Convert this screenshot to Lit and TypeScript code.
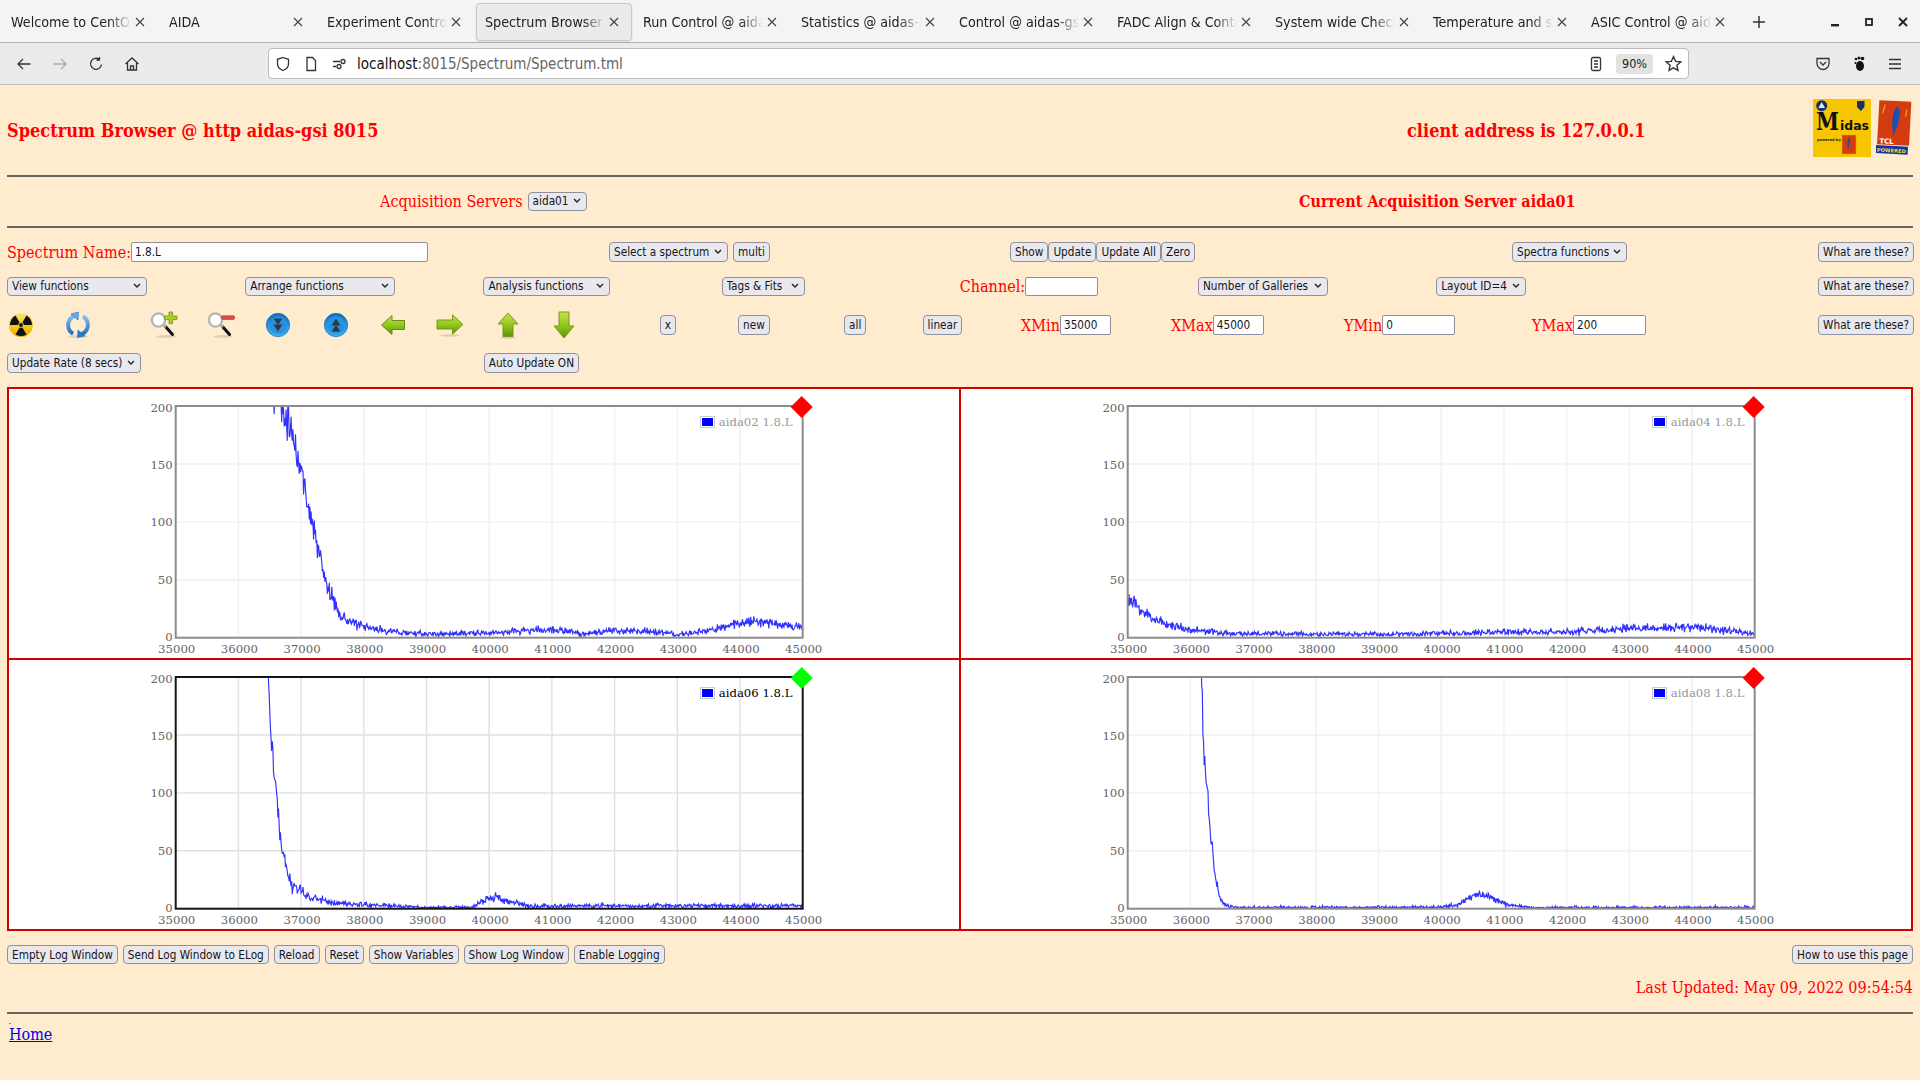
import { LitElement, html, css, svg } from "lit";
import { customElement, property } from "lit/decorators.js";

// x position / counts pairs, the noise is added on top
type Curve = [number, number][];

const CURVES: Record<string, Curve> = {
  aida02: [[35000, 900], [36450, 400], [36550, 215], [36650, 205], [36800, 190], [37000, 145], [37175, 100], [37381, 50], [37500, 33], [37670, 17], [37990, 9], [38500, 5], [39000, 3], [40000, 4], [40500, 6], [41000, 7], [41500, 3.5], [42000, 6], [42500, 6], [43000, 2.5], [43500, 6], [44000, 13], [44300, 15], [44700, 11], [45000, 9]],
  aida04: [[35000, 33], [35300, 20], [35600, 12], [36000, 7], [36500, 4], [37000, 3.5], [38000, 3], [39000, 3], [40000, 4], [41000, 5], [42000, 5], [43000, 8], [44000, 9], [44500, 7], [45000, 3]],
  aida06: [[35000, 900], [36400, 320], [36475, 200], [36513, 150], [36600, 100], [36690, 50], [36850, 20], [37140, 10], [37500, 5], [38580, 2], [39000, 1], [39700, 1.2], [39900, 6], [40000, 9], [40100, 10], [40300, 7], [40600, 2.5], [42000, 2.5], [45000, 2.5]],
  aida08: [[35000, 900], [36100, 320], [36169, 200], [36206, 150], [36260, 100], [36350, 50], [36400, 25], [36460, 10], [36540, 4], [36700, 1], [40000, 1.2], [40300, 4], [40500, 11], [40650, 13], [40900, 7], [41100, 3], [41400, 1], [45000, 1]],
};

const X_TICKS = [35000, 36000, 37000, 38000, 39000, 40000, 41000, 42000, 43000, 44000, 45000];
const Y_TICKS = [0, 50, 100, 150, 200];

const PLOT = { left: 166.7, right: 793.7, top: 17, bottom: 248.7 };

function seeded(seed: number) {
  return () => {
    seed = (seed + 0x6d2b79f5) | 0;
    let t = Math.imul(seed ^ (seed >>> 15), 1 | seed);
    t = (t + Math.imul(t ^ (t >>> 7), 61 | t)) ^ t;
    return ((t ^ (t >>> 14)) >>> 0) / 4294967296;
  };
}

function sample(curve: Curve, x: number) {
  for (let i = 1; i < curve.length; i++) {
    if (x <= curve[i][0]) {
      const [x0, y0] = curve[i - 1];
      const [x1, y1] = curve[i];
      return y0 + ((y1 - y0) * (x - x0)) / (x1 - x0);
    }
  }
  return curve[curve.length - 1][1];
}

const px = (x: number) => PLOT.left + ((x - 35000) / 10000) * (PLOT.right - PLOT.left);
const py = (y: number) => PLOT.bottom - (y / 200) * (PLOT.bottom - PLOT.top);

function spectrumPath(name: string, seed: number) {
  const rnd = seeded(seed);
  const curve = CURVES[name];
  let d = "";
  for (let x = 35000; x <= 45000; x += 10) {
    const v = sample(curve, x);
    const noise = (rnd() + rnd() + rnd() - 1.5) * Math.sqrt(v) * 1.25;
    const y = Math.max(0, v + noise);
    d += `${d ? "L" : "M"}${px(x).toFixed(1)} ${py(y).toFixed(1)}`;
  }
  return d;
}

@customElement("spectrum-chart")
export class SpectrumChart extends LitElement {
  static styles = css`
    :host {
      display: block;
      background: #fff;
    }
    svg {
      display: block;
      overflow: hidden;
    }
    text {
      font-family: "DejaVu Serif", serif;
      font-size: 11.7px;
      font-stretch: normal;
      fill: #666;
    }
    .legend {
      fill: #999;
    }
    .active .legend {
      fill: #000;
    }
    .grid {
      stroke: #f0f0f0;
      stroke-width: 1.4;
    }
    .active .grid {
      stroke: #e0e0e0;
    }
    .frame {
      fill: none;
      stroke: #8c8c8c;
      stroke-width: 2;
    }
    .active .frame {
      stroke: #141414;
    }
    .trace {
      fill: none;
      stroke: #1a1aff;
      stroke-width: 1.15;
      stroke-opacity: 0.9;
    }
  `;

  @property() name = "aida02";
  @property({ type: Number }) seed = 1;
  @property({ type: Boolean }) active = false;

  render() {
    const { left, right, top, bottom } = PLOT;
    const cx = right - 1;
    const cy = top + 1;
    return html`
      <svg width="950" height="269" viewBox="0 0 950 269" class=${this.active ? "active" : ""}>
        <defs>
          <clipPath id="plot"><rect x=${left} y=${top} width=${right - left} height=${bottom - top}></rect></clipPath>
        </defs>
        ${X_TICKS.slice(1, -1).map((t) => svg`<line class="grid" x1=${px(t)} x2=${px(t)} y1=${top} y2=${bottom}></line>`)}
        ${Y_TICKS.slice(1, -1).map((t) => svg`<line class="grid" x1=${left} x2=${right} y1=${py(t)} y2=${py(t)}></line>`)}
        <path class="trace" clip-path="url(#plot)" d=${spectrumPath(this.name, this.seed)}></path>
        <rect class="frame" x=${left} y=${top} width=${right - left} height=${bottom - top}></rect>
        ${X_TICKS.map((t) => svg`<text x=${px(t) + 1} y="264" text-anchor="middle">${t}</text>`)}
        ${Y_TICKS.map((t) => svg`<text x="163.7" y=${py(t) + 3.2 + (t / 200) * 2.8} text-anchor="end">${t}</text>`)}
        <rect x="691.5" y="27.5" width="14" height="11" fill="#fff" stroke="#ccc"></rect>
        <rect x="693" y="29" width="11" height="8" fill="#00f"></rect>
        <text class="legend" x="709.7" y="37">${this.name} 1.8.L</text>
        <polygon points="${cx},${cy - 11} ${cx + 11},${cy} ${cx},${cy + 11} ${cx - 11},${cy}" fill=${this.active ? "#0f0" : "#f00"}></polygon>
      </svg>
    `;
  }
}

function wedge(angle: number) {
  const a0 = ((angle - 30) * Math.PI) / 180;
  const a1 = ((angle + 30) * Math.PI) / 180;
  const p = (r: number, a: number) => `${(14 + r * Math.cos(a)).toFixed(2)} ${(14 + r * Math.sin(a)).toFixed(2)}`;
  return `M${p(2.8, a0)}L${p(11, a0)}A11 11 0 0 1 ${p(11, a1)}L${p(2.8, a1)}A2.8 2.8 0 0 0 ${p(2.8, a0)}Z`;
}

const iconDefs = svg`
  <defs>
    <linearGradient id="gGreen" x1="0" y1="0" x2="0" y2="1">
      <stop offset="0" stop-color="#c4e34a"></stop>
      <stop offset="0.55" stop-color="#8ec31c"></stop>
      <stop offset="1" stop-color="#5d9606"></stop>
    </linearGradient>
    <linearGradient id="gBlue" x1="0" y1="0" x2="0" y2="1">
      <stop offset="0" stop-color="#0f6fc0"></stop>
      <stop offset="0.5" stop-color="#1f96e6"></stop>
      <stop offset="1" stop-color="#38b4f2"></stop>
    </linearGradient>
    <linearGradient id="gYellow" x1="0" y1="0" x2="0" y2="1">
      <stop offset="0" stop-color="#f7e27a"></stop>
      <stop offset="0.6" stop-color="#f6c614"></stop>
      <stop offset="1" stop-color="#e9a700"></stop>
    </linearGradient>
    <linearGradient id="gArc" x1="0" y1="0" x2="0" y2="1">
      <stop offset="0" stop-color="#8cc0ee"></stop>
      <stop offset="1" stop-color="#1f6fc4"></stop>
    </linearGradient>
  </defs>
`;

function lens(sign: "plus" | "minus") {
  return svg`
    <ellipse cx="15" cy="25.5" rx="10" ry="1.4" fill="#000" opacity="0.12"></ellipse>
    <line x1="14.5" y1="15.5" x2="21.5" y2="23.5" stroke="#111" stroke-width="3" stroke-linecap="round"></line>
    <line x1="12" y1="13" x2="15" y2="16" stroke="#aaa" stroke-width="2.5"></line>
    <circle cx="7.5" cy="9" r="6.6" fill="#fff" stroke="#b5b5b5" stroke-width="2.2"></circle>
    ${sign === "plus"
      ? svg`<path d="M18 1h3.6v4H26v3.6h-4.4v4H18v-4h-4.4V5H18z" fill="#a9cf2a" stroke="#6f9412" stroke-width="0.8"></path>`
      : svg`<rect x="13.5" y="4.8" width="13" height="3.6" rx="1" fill="#e04848" stroke="#b53030" stroke-width="0.6"></rect>`}
  `;
}

function bubble(down: boolean) {
  return svg`
    <circle cx="14" cy="14" r="11.7" fill="url(#gBlue)" stroke="#0f5fa8" stroke-width="0.6"></circle>
    <circle cx="14" cy="14" r="8.8" fill="#2a90dc"></circle>
    <g transform=${down ? "" : "rotate(180 14 14)"} fill="#2c3a48">
      <polygon points="9.500,7.500 18.500,7.500 14,14"></polygon>
      <polygon points="9.500,13.500 18.500,13.500 14,20.500"></polygon>
    </g>
  `;
}

const ICONS = [
  svg`
    <circle cx="14" cy="14" r="12" fill="url(#gYellow)"></circle>
    <path d=${wedge(-150)} fill="#111"></path>
    <path d=${wedge(-30)} fill="#111"></path>
    <path d=${wedge(90)} fill="#111"></path>
    <circle cx="14" cy="14" r="1.9" fill="#111"></circle>
  `,
  svg`
    <ellipse cx="14" cy="25.5" rx="11" ry="1.4" fill="#000" opacity="0.1"></ellipse>
    <path d="M11 4.5C5.5 6.5 3 12 4.5 17c.8 2.6 2.4 4.5 4.6 5.8" fill="none" stroke="url(#gArc)" stroke-width="4"></path>
    <polygon points="7,3 14.5,1 14,9" fill="#6eaae4" stroke="#1f6fc4" stroke-width="0.6"></polygon>
    <path d="M17 23.5c5.5-2 8-7.500 6.500-12.500-.8-2.600-2.400-4.500-4.600-5.800" fill="none" stroke="url(#gArc)" stroke-width="4"></path>
    <polygon points="21,25 13.500,26.500 14,19" fill="#2a7ccc" stroke="#1f6fc4" stroke-width="0.6"></polygon>
  `,
  lens("plus"),
  lens("minus"),
  bubble(true),
  bubble(false),
  svg`<polygon points="2.500,14 13,4.500 13,9.500 25.500,9.500 25.500,18.500 13,18.500 13,23.500" fill="url(#gGreen)" stroke="#5c8410" stroke-width="0.9"></polygon>`,
  svg`<ellipse cx="14" cy="24.500" rx="10" ry="1.200" fill="#000" opacity="0.12"></ellipse>
      <polygon points="27,13.500 16.500,3.800 16.500,9 1,9 1,18 16.500,18 16.500,23.200" fill="url(#gGreen)" stroke="#6d9413" stroke-width="0.9"></polygon>`,
  svg`<ellipse cx="14" cy="26.500" rx="8" ry="1.100" fill="#000" opacity="0.14"></ellipse>
      <polygon points="14,2 24,13 19,13 19,25.500 9,25.500 9,13 4,13" fill="url(#gGreen)" stroke="#6d9413" stroke-width="0.9"></polygon>`,
  svg`<polygon points="14,27 24,15 19,15 19,1 9,1 9,15 4,15" fill="url(#gGreen)" stroke="#6d9413" stroke-width="0.9"></polygon>`,
];

const TABS = [
  "Welcome to CentOS Linux",
  "AIDA",
  "Experiment Control",
  "Spectrum Browser",
  "Run Control @ aidas-gsi",
  "Statistics @ aidas-gsi",
  "Control @ aidas-gsi",
  "FADC Align & Control",
  "System wide Checks",
  "Temperature and status",
  "ASIC Control @ aidas-gsi",
];

@customElement("app-root")
export class AppRoot extends LitElement {
  static styles = css`
    :host {
      display: block;
      width: 1920px;
      height: 1080px;
      overflow: hidden;
      background: #ffebcd;
      font-family: "DejaVu Serif", serif;
      font-size: 16px;
      font-stretch: condensed;
      color: #f00;
    }

    /* browser chrome */
    .tabbar {
      display: flex;
      align-items: center;
      height: 43px;
      padding: 3px 0 2px 2px;
      box-sizing: border-box;
      background: #f4f4f4;
      border-bottom: 1px solid #b5b5b5;
      font-family: "DejaVu Sans", sans-serif;
      font-size: 14.2px;
      color: #222;
    }
    .tab {
      display: flex;
      align-items: center;
      width: 156px;
      height: 38px;
      margin-right: 2px;
      padding-left: 8px;
      box-sizing: border-box;
      border: 1px solid transparent;
      border-radius: 4px;
      flex: none;
    }
    .tab.active {
      background: #ebebeb;
      border-color: #c8c8c8;
      box-shadow: 0 1px 2px rgba(0, 0, 0, 0.12);
    }
    .tab-label {
      flex: 1;
      overflow: hidden;
      white-space: nowrap;
      -webkit-mask-image: linear-gradient(to right, #000 98px, transparent 120px);
      mask-image: linear-gradient(to right, #000 98px, transparent 120px);
    }
    .tab svg {
      margin-right: 12px;
      flex: none;
    }
    .tab-new {
      margin-left: 12px;
      display: flex;
    }
    .window-buttons {
      display: flex;
      gap: 24px;
      margin-left: auto;
      margin-right: 12px;
    }
    .toolbar {
      display: flex;
      align-items: center;
      height: 42px;
      box-sizing: border-box;
      padding-left: 16px;
      background: #ebebeb;
      border-bottom: 1px solid #bdbdbd;
      color: #222;
    }
    .nav {
      display: flex;
      gap: 20px;
      width: 252px;
      flex: none;
    }
    .urlbar {
      display: flex;
      align-items: center;
      width: 1421px;
      height: 31px;
      box-sizing: border-box;
      padding: 0 6px 0 6px;
      gap: 12px;
      background: #fff;
      border: 1px solid #bbb;
      border-radius: 4px;
      font-family: "DejaVu Sans", sans-serif;
      font-size: 15px;
      flex: none;
    }
    .url {
      flex: 1;
      margin-left: -2px;
      color: #666;
      white-space: nowrap;
    }
    .url b {
      font-weight: normal;
      color: #111;
    }
    .zoom-chip {
      display: flex;
      align-items: center;
      justify-content: center;
      width: 37px;
      height: 20px;
      background: #e2e2e2;
      border-radius: 3px;
      font-size: 12.5px;
    }
    .extras {
      display: flex;
      gap: 20px;
      margin-left: 126px;
    }

    /* page */
    .page {
      padding: 0 7px;
    }
    .head {
      display: grid;
      grid-template-columns: 1400px 406px auto;
      align-items: center;
      height: 90px;
      font-size: 18px;
      font-weight: bold;
    }
    .logos {
      display: flex;
      gap: 5px;
      margin-bottom: 4px;
      font-stretch: normal;
    }
    hr {
      height: 2px;
      margin: 0;
      border: 0;
      background: #666;
    }
    .servers {
      display: grid;
      grid-template-columns: 373px 919px auto;
      align-items: center;
      height: 48.5px;
    }
    .current {
      font-weight: bold;
    }
    .row {
      display: grid;
      grid-template-rows: 19.5px;
      align-items: center;
      justify-items: start;
      height: 19.5px;
    }
    .row-a {
      margin-top: 14.8px;
      grid-template-columns: 602px 401px 502px 306px auto;
    }
    .row-b {
      margin-top: 14.9px;
      grid-template-columns: repeat(6, 238.200px) 382px auto;
    }
    .row-c {
      margin-top: 19.1px;
      grid-template-columns: 57px 86.500px 57px 56px 58.500px 56.600px 57.400px 58px 55.700px 110px 78.400px 106px 78.500px 98.500px 150px 173px 188px 286px auto;
    }
    .row-d {
      margin-top: 18.5px;
      grid-template-columns: 476.700px auto;
    }
    .pair {
      display: flex;
      align-items: center;
    }
    .gap {
      gap: 5px;
    }
    .tool-icon {
      width: 28px;
      height: 28px;
      overflow: visible;
      display: block;
    }
    button,
    select,
    input {
      box-sizing: border-box;
      height: 19.5px;
      margin: 0;
      font-family: "DejaVu Sans", sans-serif;
      font-size: 11.7px;
      font-stretch: condensed;
      color: #15141a;
      border: 1px solid #8f8f9d;
    }
    button {
      padding: 0 4px;
      background: #e9e9ed;
      border-radius: 4px;
      white-space: nowrap;
    }
    select {
      -webkit-appearance: none;
      appearance: none;
      padding: 0 0 0 4px;
      border-radius: 4px;
      background: #e9e9ed url("data:image/svg+xml,%3Csvg xmlns='http://www.w3.org/2000/svg' width='8' height='6'%3E%3Cpath d='M1 1l3 3 3-3' fill='none' stroke='%23222' stroke-width='1.400'/%3E%3C/svg%3E") no-repeat right 5px center;
    }
    input {
      padding: 0 3px;
      background: #fff;
      border-radius: 2px;
    }
    .s-59 { width: 59.500px; }
    .s-119 { width: 119px; }
    .s-115 { width: 115px; }
    .s-139 { width: 139.500px; }
    .s-149 { width: 149.500px; }
    .s-127 { width: 127px; }
    .s-83 { width: 83.500px; }
    .s-130 { width: 130px; }
    .s-90 { width: 89.700px; }
    .s-134 { width: 133.500px; }
    .i-297 { width: 297px; }
    .i-73 { width: 73px; }
    .i-51 { width: 51.500px; }
    .joined {
      display: flex;
    }
    .gallery {
      display: grid;
      grid-template-columns: 950px 950px;
      grid-template-rows: 269px 269px;
      gap: 2px;
      width: 1906px;
      margin-top: 14.2px;
      background: #d00000;
      border: 2px solid #d00000;
      box-sizing: border-box;
    }
    .actions {
      display: flex;
      gap: 5px;
      margin-top: 14px;
    }
    .actions .help {
      margin-left: auto;
    }
    .updated {
      margin-top: 15px;
      text-align: right;
      line-height: 18px;
    }
    .rule-low {
      margin-top: 15px;
    }
    .dot {
      width: 2px;
      height: 1px;
      margin: 9px 0 0 2px;
      background: #888;
    }
    a {
      display: inline-block;
      margin: 2px 0 0 2px;
      color: #00e;
      line-height: 18px;
    }
  `;

  private closeIcon() {
    return html`<svg width="10" height="10" viewBox="0 0 10 10"><path d="M1 1l8 8M9 1l-8 8" stroke="#444" stroke-width="1.200"></path></svg>`;
  }

  private renderTabs() {
    return html`
      <div class="tabbar">
        ${TABS.map(
          (t, i) => html`<div class="tab ${i === 3 ? "active" : ""}"><span class="tab-label">${t}</span>${this.closeIcon()}</div>`
        )}
        <span class="tab-new">
          <svg width="14" height="14" viewBox="0 0 14 14"><path d="M7 1v12M1 7h12" stroke="#333" stroke-width="1.500"></path></svg>
        </span>
        <div class="window-buttons">
          <svg width="10" height="10" viewBox="0 0 10 10"><rect x="1" y="7" width="8" height="2.400" fill="#222"></rect></svg>
          <svg width="10" height="10" viewBox="0 0 10 10"><rect x="2" y="2" width="6" height="6" fill="none" stroke="#222" stroke-width="1.800"></rect></svg>
          <svg width="10" height="10" viewBox="0 0 10 10"><path d="M1 1l8 8M9 1l-8 8" stroke="#222" stroke-width="1.800"></path></svg>
        </div>
      </div>
    `;
  }

  private renderToolbar() {
    const icon = (body: unknown, size = 16) =>
      html`<svg width=${size} height=${size} viewBox="0 0 16 16" fill="none" stroke="#333" stroke-width="1.300">${body}</svg>`;
    return html`
      <div class="toolbar">
        <div class="nav">
          ${icon(svg`<path d="M14.500 8H2M7 3L2 8l5 5"></path>`)}
          ${icon(svg`<path d="M1.500 8H14M9 3l5 5-5 5" stroke="#aaa"></path>`)}
          ${icon(svg`<path d="M13.500 8.500A5.500 5.500 0 1 1 11.500 3.500M11.500 1v3h-3"></path>`)}
          ${icon(svg`<path d="M1.500 8L8 2l6.500 6M3.500 7v7h9V7M6.500 14v-4h3v4"></path>`)}
        </div>
        <div class="urlbar">
          ${icon(svg`<path d="M8 1.500l5.500 1.800V8c0 3-2.500 5.300-5.500 6.500C5 13.300 2.500 11 2.500 8V3.300z"></path>`)}
          ${icon(svg`<path d="M4 1.500h5.500L12.500 4.500V14.500H4z"></path>`)}
          ${icon(svg`<path d="M2 5.500h7M2 10.500h3"></path><circle cx="12" cy="5.500" r="2"></circle><circle cx="8" cy="10.500" r="2"></circle>`)}
          <span class="url"><b>localhost</b>:8015/Spectrum/Spectrum.tml</span>
          ${icon(svg`<rect x="3.500" y="1.500" width="9" height="13" rx="1.500"></rect><path d="M6 5h4M6 8h4M6 11h4"></path>`)}
          <span class="zoom-chip">90%</span>
          ${icon(svg`<path d="M8 1.500l2 4.500 4.800.500-3.600 3.200 1 4.800L8 12.100 3.800 14.500l1-4.800L1.200 6.500 6 6z"></path>`, 17)}
        </div>
        <div class="extras">
          ${icon(svg`<path d="M2 2.500h12v5c0 3.500-3 6-6 6s-6-2.500-6-6z"></path><path d="M5 6l3 3 3-3"></path>`)}
          <svg width="16" height="16" viewBox="0 0 16 16" fill="#111">
            <ellipse cx="9" cy="10" rx="4" ry="5"></ellipse>
            <circle cx="5" cy="3" r="1.300"></circle>
            <circle cx="8" cy="2" r="1.500"></circle>
            <circle cx="11.500" cy="2.500" r="1.800"></circle>
            <circle cx="4.500" cy="7" r="1.100"></circle>
          </svg>
          ${icon(svg`<path d="M2 3.500h12M2 8h12M2 12.500h12"></path>`)}
        </div>
      </div>
    `;
  }

  private renderLogos() {
    return html`
      <div class="logos">
        <svg width="58" height="58" viewBox="0 0 58 58">
          <rect width="58" height="58" fill="#f7c600"></rect>
          <circle cx="8.700" cy="6.700" r="5.500" fill="#14306e"></circle>
          <polygon points="8.700,3 12,9 5.400,9" fill="#dfe6f2"></polygon>
          <path d="M44 2h7.500v6l-3.700 4L44 8z" fill="#14306e"></path>
          <text x="3" y="31" font-family="DejaVu Serif" font-weight="bold" font-size="25" textLength="23" lengthAdjust="spacingAndGlyphs" fill="#111">M</text>
          <text x="27" y="31" font-family="DejaVu Sans" font-weight="bold" font-size="12" textLength="29" lengthAdjust="spacingAndGlyphs" fill="#111">idas</text>
          <text x="4" y="42" font-family="DejaVu Sans" font-weight="bold" font-size="3.600" fill="#222">powered by</text>
          <rect x="29" y="36" width="14" height="19" fill="#d23c10" stroke="#e8a000" stroke-width="0.600"></rect>
          <path d="M36.500 38c1.500 3-.3 8-1.300 12-1.200-4-1.200-9 1.300-12z" fill="#1d4fb0"></path>
        </svg>
        <svg width="37" height="58" viewBox="0 0 37 58">
          <g transform="rotate(3 18 28)">
            <rect x="2" y="2" width="32" height="44" fill="#d23c10"></rect>
            <path d="M20 7c5 4 3 12 1 20l-3 10c-2-8-4-22 2-30z" fill="#1d4fb0"></path>
            <path d="M8 6l-2 9M30 10l-1 7" stroke="#f0a020" stroke-width="1.200"></path>
            <text x="4" y="45" font-family="DejaVu Sans" font-weight="bold" font-size="7" fill="#fff">TCL</text>
            <rect x="0" y="47" width="33" height="8" fill="#1034a8"></rect>
            <text x="2" y="53.500" font-family="DejaVu Sans" font-weight="bold" font-size="5" textLength="29" fill="#f4e020">POWERED</text>
          </g>
        </svg>
      </div>
    `;
  }

  private renderControls() {
    const what = html`<button>What are these?</button>`;
    return html`
      <div class="servers">
        <span></span>
        <div class="pair gap">
          <span>Acquisition Servers</span>
          <select class="s-59"><option>aida01</option></select>
        </div>
        <span class="current">Current Acquisition Server aida01</span>
      </div>
      <hr />
      <div class="row row-a">
        <div class="pair">
          <span>Spectrum Name:</span>
          <input class="i-297" .value=${"1.8.L"} />
        </div>
        <div class="pair gap">
          <select class="s-119"><option>Select a spectrum</option></select>
          <button>multi</button>
        </div>
        <div class="joined">
          <button>Show</button><button>Update</button><button>Update All</button><button>Zero</button>
        </div>
        <select class="s-115"><option>Spectra functions</option></select>
        ${what}
      </div>
      <div class="row row-b">
        <select class="s-139"><option>View functions</option></select>
        <select class="s-149"><option>Arrange functions</option></select>
        <select class="s-127"><option>Analysis functions</option></select>
        <select class="s-83"><option>Tags &amp; Fits</option></select>
        <div class="pair">
          <span>Channel:</span>
          <input class="i-73" />
        </div>
        <select class="s-130"><option>Number of Galleries</option></select>
        <select class="s-90"><option>Layout ID=4</option></select>
        ${what}
      </div>
      <div class="row row-c">
        ${ICONS.map(
          (body) => html`<svg class="tool-icon" viewBox="0 0 28 28">${iconDefs}${body}</svg>`
        )}
        <button>x</button>
        <button>new</button>
        <button>all</button>
        <button>linear</button>
        <div class="pair"><span>XMin</span><input class="i-51" .value=${"35000"} /></div>
        <div class="pair"><span>XMax</span><input class="i-51" .value=${"45000"} /></div>
        <div class="pair"><span>YMin</span><input class="i-73" .value=${"0"} /></div>
        <div class="pair"><span>YMax</span><input class="i-73" .value=${"200"} /></div>
        ${what}
      </div>
      <div class="row row-d">
        <select class="s-134"><option>Update Rate (8 secs)</option></select>
        <button>Auto Update ON</button>
      </div>
    `;
  }

  render() {
    return html`
      ${this.renderTabs()} ${this.renderToolbar()}
      <div class="page">
        <div class="head">
          <span>Spectrum Browser @ http aidas-gsi 8015</span>
          <span>client address is 127.0.0.1</span>
          ${this.renderLogos()}
        </div>
        <hr />
        ${this.renderControls()}
        <div class="gallery">
          <spectrum-chart name="aida02" seed="11"></spectrum-chart>
          <spectrum-chart name="aida04" seed="23"></spectrum-chart>
          <spectrum-chart name="aida06" seed="37" active></spectrum-chart>
          <spectrum-chart name="aida08" seed="41"></spectrum-chart>
        </div>
        <div class="actions">
          <button>Empty Log Window</button>
          <button>Send Log Window to ELog</button>
          <button>Reload</button>
          <button>Reset</button>
          <button>Show Variables</button>
          <button>Show Log Window</button>
          <button>Enable Logging</button>
          <button class="help">How to use this page</button>
        </div>
        <div class="updated">Last Updated: May 09, 2022 09:54:54</div>
        <hr class="rule-low" />
        <div class="dot"></div>
        <a href="#">Home</a>
      </div>
    `;
  }
}
